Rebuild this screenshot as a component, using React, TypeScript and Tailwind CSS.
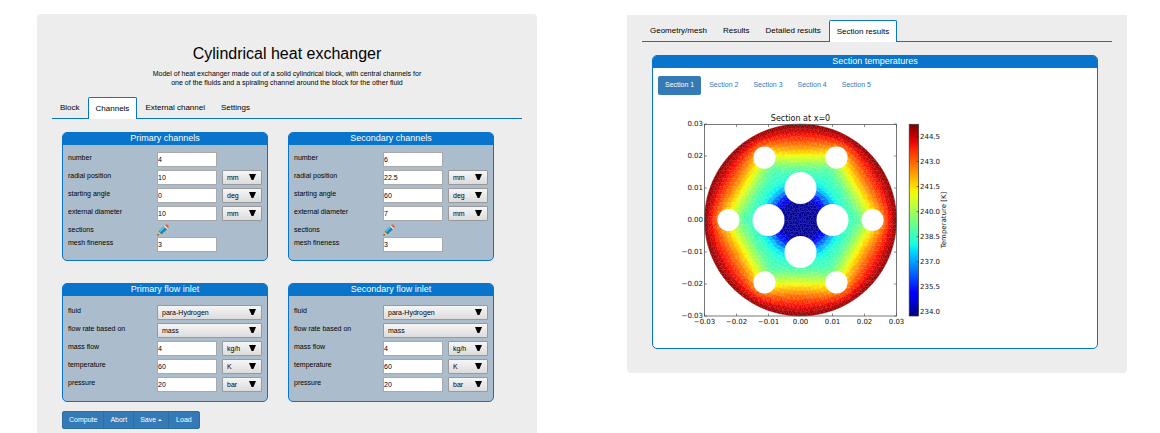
import React, { useState } from "react";

/* ---------- temperature plot ---------- */

type Point = { x: number; y: number; t: number };

const CX = 800.5;
const CY = 220;
const SCALE = 3200;
const T_MIN = 233.7;
const T_MAX = 245.25;

const OUTER_PROFILE = [
  [0, 234], [0.0058, 233.9], [0.0068, 234.3], [0.008, 235.1], [0.009, 235.9],
  [0.01, 236.7], [0.0115, 237.6], [0.013, 238.2], [0.0155, 238.8], [0.017, 239.5],
  [0.0185, 240.3], [0.0203, 241.2], [0.0214, 241.8], [0.0234, 242.7],
  [0.0255, 243.6], [0.028, 244.5], [0.03, 245.2],
];

function profile(s: number) {
  for (let i = 1; i < OUTER_PROFILE.length; i++) {
    const [s1, t1] = OUTER_PROFILE[i];
    const [s0, t0] = OUTER_PROFILE[i - 1];
    if (s <= s1) return t0 + ((t1 - t0) * (s - s0)) / (s1 - s0);
  }
  return 245.2;
}

const clamp = (v: number) => Math.max(0, Math.min(1, v));

function temperature(r: number, theta: number) {
  const sector = Math.PI / 3;
  const phi = (((theta % sector) + sector) % sector) - sector / 2;
  const hex = r * Math.cos(phi);
  const weight = Math.min(clamp((r - 0.012) / 0.006), clamp((0.03 - r) / 0.006));
  return profile(r + (hex - r) * weight * 1.1);
}

function jet(t: number) {
  const v = clamp((t - T_MIN) / (T_MAX - T_MIN));
  const ch = (stops: number[][]) => {
    for (let i = 1; i < stops.length; i++) {
      if (v <= stops[i][0]) {
        const [a, p] = stops[i - 1];
        const [b, q] = stops[i];
        return Math.round(255 * (p + ((q - p) * (v - a)) / (b - a)));
      }
    }
    return 0;
  };
  const r = ch([[0, 0], [0.35, 0], [0.66, 1], [0.89, 1], [1, 0.5]]);
  const g = ch([[0, 0], [0.125, 0], [0.375, 1], [0.64, 1], [0.91, 0], [1, 0]]);
  const b = ch([[0, 0.5], [0.11, 1], [0.34, 1], [0.65, 0], [1, 0]]);
  return `rgb(${r},${g},${b})`;
}

function buildMesh() {
  const rings = 23;
  const noise = (i: number, j: number) => {
    const n = Math.sin(i * 127.1 + j * 311.7) * 43758.5453;
    return n - Math.floor(n) - 0.5;
  };
  const grid: Point[][] = [];
  for (let i = 0; i <= rings; i++) {
    const count = Math.max(1, 6 * i);
    const row: Point[] = [];
    for (let j = 0; j < count; j++) {
      const edge = i === rings;
      const step = 0.03 / rings;
      const r = edge ? 0.03 : i * step + noise(i, j) * step * 0.4;
      const a = (2 * Math.PI * (j + (edge ? 0 : noise(j, i) * 0.4))) / count;
      row.push({
        x: CX + SCALE * r * Math.cos(a),
        y: CY - SCALE * r * Math.sin(a),
        t: temperature(Math.abs(r), a),
      });
    }
    grid.push(row);
  }
  const faces: Point[][] = [];
  for (let i = 1; i <= rings; i++) {
    const outer = grid[i];
    const inner = grid[i - 1];
    for (let k = 0; k < 6; k++) {
      for (let m = 0; m < i; m++) {
        const o0 = outer[(k * i + m) % outer.length];
        const o1 = outer[(k * i + m + 1) % outer.length];
        const n0 = inner[(k * (i - 1) + m) % inner.length];
        faces.push([o0, o1, n0]);
        if (m < i - 1) {
          const n1 = inner[(k * (i - 1) + m + 1) % inner.length];
          faces.push([o1, n1, n0]);
        }
      }
    }
  }
  return faces.map((f) => ({
    d: "M" + f.map((p) => `${p.x.toFixed(2)} ${p.y.toFixed(2)}`).join("L") + "Z",
    fill: jet((f[0].t + f[1].t + f[2].t) / 3),
  }));
}

const MESH = buildMesh();
const AXIS = [-0.03, -0.02, -0.01, 0, 0.01, 0.02, 0.03];
const BAR_TICKS = [244.5, 243, 241.5, 240, 238.5, 237, 235.5, 234];
const BAR_STOPS = Array.from({ length: 33 }, (_, i) => i / 32);
const barY = (t: number) => 136.5 + (244.5 - t) * 16.7;
const axisLabel = (v: number) => (v < 0 ? "−" : "") + Math.abs(v).toFixed(2);

function SectionPlot() {
  return (
    <svg
      viewBox="680 105 280 230"
      width="280"
      height="230"
      role="img"
      aria-label="Section at x=0"
      className="ml-[27px] mt-[10px] block font-['DejaVu_Sans',sans-serif] text-[7px]"
      fill="#111"
    >
      <defs>
        <linearGradient id="jet" x1="0" y1="1" x2="0" y2="0">
          {BAR_STOPS.map((s) => (
            <stop key={s} offset={s} stopColor={jet(T_MIN + s * (T_MAX - T_MIN))} />
          ))}
        </linearGradient>
      </defs>
      {MESH.map((f, i) => (
        <path key={i} d={f.d} fill={f.fill} stroke={f.fill} strokeWidth="0.4" />
      ))}
      <g fill="none" stroke="#fff" strokeOpacity="0.12" strokeWidth="0.3">
        <path d={MESH.map((f) => f.d).join("")} />
      </g>
      <g fill="#fff">
        {[0, 90, 180, 270].map((a) => (
          <circle
            key={a}
            cx={CX + 32 * Math.cos((a * Math.PI) / 180)}
            cy={CY - 32 * Math.sin((a * Math.PI) / 180)}
            r="16"
          />
        ))}
        {[0, 60, 120, 180, 240, 300].map((a) => (
          <circle
            key={a}
            cx={CX + 72 * Math.cos((a * Math.PI) / 180)}
            cy={CY - 72 * Math.sin((a * Math.PI) / 180)}
            r="11.1"
          />
        ))}
      </g>
      <rect x="704.5" y="124.5" width="192" height="191.5" fill="none" stroke="#555" strokeWidth="0.8" />
      {AXIS.map((v) => {
        const x = CX + v * SCALE;
        const y = CY - v * SCALE;
        return (
          <g key={v}>
            <path
              d={`M${x} 316v-2.5M${x} 124.5v2.5M704.5 ${y}h2.5M896.5 ${y}h-2.5`}
              stroke="#444"
              strokeWidth="0.6"
            />
            <text x={x} y="324" textAnchor="middle">{axisLabel(v)}</text>
            <text x="703" y={y + 2} textAnchor="end">{axisLabel(v)}</text>
          </g>
        );
      })}
      <text x="800.5" y="121" textAnchor="middle" className="text-[8px]">Section at x=0</text>
      <rect x="909.2" y="124.3" width="9.4" height="191.7" fill="url(#jet)" stroke="#333" strokeWidth="0.7" />
      {BAR_TICKS.map((t) => (
        <g key={t}>
          <path d={`M918.6 ${barY(t)}h-2`} stroke="#222" strokeWidth="0.6" />
          <text x="920" y={barY(t) + 2.5}>{t.toFixed(1)}</text>
        </g>
      ))}
      <text transform="translate(946 220) rotate(-90)" textAnchor="middle">Temperature [K]</text>
    </svg>
  );
}

/* ---------- form parts ---------- */

function Select({ label, options, id, wide }: { label: string; options: string[]; id?: string; wide?: boolean }) {
  return (
    <div className={wide ? "relative col-span-2" : "relative"}>
      <select
        id={id}
        aria-label={id ? undefined : label}
        className="block h-[15px] w-full appearance-none rounded-[1px] border border-[#999] bg-linear-to-b from-[#f6f6f6] to-[#dcdcdc] pl-1 pt-px text-[7px] text-black"
      >
        {options.map((o) => (
          <option key={o}>{o}</option>
        ))}
      </select>
      <svg viewBox="0 0 7 6" className="pointer-events-none absolute right-[6px] top-[4px] h-[6px] w-[7px]" aria-hidden="true">
        <path d="M0 0h7L4.4 6H2.6Z" fill="#000" />
      </svg>
    </div>
  );
}

function Pencil() {
  return (
    <svg viewBox="0 0 12 12" className="size-3" aria-hidden="true">
      <path d="M0.6 11.4 1.6 7.6 4.6 10.6Z" fill="#f1c05a" />
      <path d="M0.3 11.7 0.9 9.7 2.4 11.1Z" fill="#4a3a22" />
      <path d="M1.6 7.6 7 2.2 10 5.2 4.6 10.6Z" fill="#1c86b8" />
      <path d="M2.2 7 7 2.2 8.2 3.4 3.4 8.2Z" fill="#55bfe2" />
      <path d="M7 2.2 8 1.2 11 4.2 10 5.2Z" fill="#e8e4da" />
      <path d="M8 1.2Q9 0.2 10.2 0.6Q11.8 1.4 11.8 2.8Q11.8 3.4 11 4.2Z" fill="#e0653a" />
    </svg>
  );
}

type Row = { label: string; value?: string; units?: string[]; options?: string[]; edit?: boolean };

function FieldCard({ title, rows, body }: { title: string; rows: Row[]; body: string }) {
  const slug = title.toLowerCase().replace(/ /g, "-");
  return (
    <section className="overflow-hidden rounded-[5px] border border-[#0874cb] bg-[#abbdcd]">
      <h2 className="h-3 bg-[#0874cb] text-center text-[9px] leading-[11px] text-white">{title}</h2>
      <div className={`grid gap-y-[3px] px-[5px] ${body}`}>
        {rows.map((row) => {
          const id = `${slug}-${row.label.replace(/ /g, "-")}`;
          return (
            <div key={row.label} className="grid grid-cols-[1fr_60px_40px] items-start gap-x-[5px]">
              <label htmlFor={id} className="h-[10px] whitespace-nowrap leading-[12px]">{row.label}</label>
              {row.edit && (
                <button id={id} type="button" aria-label="Edit sections" className="h-[10px] w-3 cursor-pointer">
                  <Pencil />
                </button>
              )}
              {row.options && <Select id={id} label={row.label} options={row.options} wide />}
              {row.value !== undefined && (
                <input
                  id={id}
                  defaultValue={row.value}
                  className="h-[15px] w-full border border-[#a9a9a9] bg-white text-[7px] text-black"
                />
              )}
              {row.units && <Select label={`${row.label} unit`} options={row.units} />}
            </div>
          );
        })}
      </div>
    </section>
  );
}

const MM = ["mm", "cm", "m"];
const DEG = ["deg", "rad"];

const channelRows = (n: string, radial: string, angle: string, diameter: string): Row[] => [
  { label: "number", value: n },
  { label: "radial position", value: radial, units: MM },
  { label: "starting angle", value: angle, units: DEG },
  { label: "external diameter", value: diameter, units: MM },
  { label: "sections", edit: true },
  { label: "mesh fineness", value: "3" },
];

const FLOW_ROWS: Row[] = [
  { label: "fluid", options: ["para-Hydrogen", "Nitrogen", "Water"] },
  { label: "flow rate based on", options: ["mass", "volume"] },
  { label: "mass flow", value: "4", units: ["kg/h", "kg/s"] },
  { label: "temperature", value: "60", units: ["K", "°C"] },
  { label: "pressure", value: "20", units: ["bar", "Pa"] },
];

function Tabs({ items, initial }: { items: string[]; initial: string }) {
  const [active, setActive] = useState(initial);
  return (
    <div role="tablist" className="flex border-b border-[#0874cb] text-[8px] leading-[9px]">
      {items.map((item) => (
        <button
          key={item}
          role="tab"
          type="button"
          aria-selected={item === active}
          onClick={() => setActive(item)}
          className={
            item === active
              ? "-mb-px h-[22px] rounded-t-[2px] border border-b-0 border-[#0874cb] bg-white px-[7px] text-black"
              : "h-[21px] border border-b-0 border-transparent px-[7px] pb-[2px] text-black"
          }
        >
          {item}
        </button>
      ))}
    </div>
  );
}

const SECTIONS = ["Section 1", "Section 2", "Section 3", "Section 4", "Section 5"];

export default function App() {
  const [section, setSection] = useState(SECTIONS[0]);
  return (
    <main className="grid grid-cols-2 items-start gap-x-[90px] bg-white pl-[37px] pr-[33px] pt-[14px] font-['Liberation_Sans',Arial,sans-serif] text-[7px] text-black">
      <div className="rounded-t-[4px] bg-[#ededed] px-[15px] pb-1 pt-[30px]">
        <header className="text-center">
          <h1 className="text-[16px] leading-[20px] text-black">Cylindrical heat exchanger</h1>
          <p className="mx-auto mt-[5px] max-w-[280px] leading-[9px]">
            Model of heat exchanger made out of a solid cylindrical block, with central channels for one of the fluids
            and a spiraling channel around the block for the other fluid
          </p>
        </header>
        <div className="mt-[10px]">
          <Tabs items={["Block", "Channels", "External channel", "Settings"]} initial="Channels" />
        </div>
        <form className="pl-[10px] pr-[28px] pt-[13px]" onSubmit={(e) => e.preventDefault()}>
          <div className="grid grid-cols-2 gap-x-5 gap-y-[22px]">
            <FieldCard title="Primary channels" rows={channelRows("4", "10", "0", "10")} body="pb-2 pt-[7px]" />
            <FieldCard title="Secondary channels" rows={channelRows("6", "22.5", "60", "7")} body="pb-2 pt-[7px]" />
            <FieldCard title="Primary flow inlet" rows={FLOW_ROWS} body="pb-[9px] pt-[9px]" />
            <FieldCard title="Secondary flow inlet" rows={FLOW_ROWS} body="pb-[9px] pt-[9px]" />
          </div>
          <div className="mt-[9px] inline-flex h-[18px] divide-x divide-[#2e6da4] overflow-hidden rounded-[2px] border border-[#2e6da4] bg-[#337ab7] align-top text-white">
            <button type="button" className="px-[6px]">Compute</button>
            <button type="button" className="px-[6px]">Abort</button>
            <button type="button" className="flex items-center gap-[2px] px-[6px]">
              Save
              <svg viewBox="0 0 4 2" className="h-[2px] w-1" aria-hidden="true">
                <path d="M0 2 2 0 4 2Z" fill="#fff" />
              </svg>
            </button>
            <button type="button" className="px-[7px]">Load</button>
          </div>
        </form>
      </div>

      <div className="mt-px rounded-b-[4px] bg-[#ededed] px-[15px] pb-6 pt-[5px]">
        <Tabs items={["Geometry/mesh", "Results", "Detailed results", "Section results"]} initial="Section results" />
        <section className="ml-[10px] mr-[14px] mt-[13px] overflow-hidden rounded-[5px] border border-[#0874cb] bg-white pb-[13px]">
          <h2 className="h-3 bg-[#0874cb] text-center text-[9px] leading-[11px] text-white">Section temperatures</h2>
          <nav className="flex gap-px px-[5px] pt-2">
            {SECTIONS.map((s) => (
              <button
                key={s}
                type="button"
                aria-pressed={s === section}
                onClick={() => setSection(s)}
                className={
                  s === section
                    ? "h-[19px] rounded-[2px] bg-[#337ab7] px-[7px] text-white"
                    : "h-[19px] rounded-[2px] px-[7px] text-[#337ab7]"
                }
              >
                {s}
              </button>
            ))}
          </nav>
          <SectionPlot />
        </section>
      </div>
    </main>
  );
}
